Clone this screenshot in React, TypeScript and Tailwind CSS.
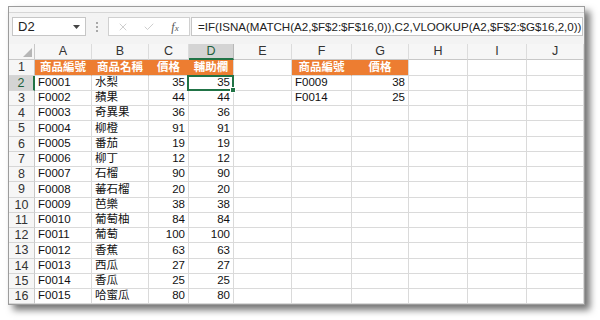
import { X, Check } from 'lucide-react'

type Col = { key: string; w: string; align: 'left' | 'right' | 'center' }

const cols: Col[] = [
  { key: 'A', w: 'w-[57px]', align: 'left' },
  { key: 'B', w: 'w-[57px]', align: 'left' },
  { key: 'C', w: 'w-[40px]', align: 'right' },
  { key: 'D', w: 'w-[45px]', align: 'right' },
  { key: 'E', w: 'w-[58px]', align: 'left' },
  { key: 'F', w: 'w-[60px]', align: 'left' },
  { key: 'G', w: 'w-[57px]', align: 'right' },
  { key: 'H', w: 'w-[59px]', align: 'left' },
  { key: 'I', w: 'w-[59px]', align: 'left' },
  { key: 'J', w: 'w-[57px]', align: 'left' },
]

const rowH = ['h-[16px]', 'h-[15px]', 'h-[15px]', 'h-[15px]']

const fruits = ['水梨', '蘋果', '奇異果', '柳橙', '番茄', '柳丁', '石榴', '蕃石榴', '芭樂', '葡萄柚', '葡萄', '香蕉', '西瓜', '香瓜', '哈蜜瓜']
const prices = [35, 44, 36, 91, 19, 12, 90, 20, 38, 84, 100, 63, 27, 25, 80]

const header: Record<string, string> = { A: '商品編號', B: '商品名稱', C: '價格', D: '輔助欄', F: '商品編號', G: '價格' }
const lookup = [['F0009', '38'], ['F0014', '25']]

const font = "font-['Liberation_Sans','Noto_Sans_CJK_TC',sans-serif]"

function cellValue(col: string, r: number): string {
  if (r === 1) return header[col] ?? ''
  const i = r - 2
  if (col === 'A') return 'F' + String(i + 1).padStart(4, '0')
  if (col === 'B') return fruits[i]
  if (col === 'C' || col === 'D') return String(prices[i])
  if (col === 'F' && lookup[i]) return lookup[i][0]
  if (col === 'G' && lookup[i]) return lookup[i][1]
  return ''
}

export default function App() {
  const rows = Array.from({ length: 16 }, (_, i) => i + 1)

  return (
    <div className={`w-[600px] h-[320px] bg-white pt-[6px] pl-[8px] ${font}`}>
      <div className="w-[577px] border border-[#9c9c9c] bg-white shadow-[5px_5px_7px_rgba(0,0,0,0.55)]">
        {/* ribbon edge */}
        <div className="h-[6px] bg-[#f6f6f6] border-b border-[#d6d6d6]" />

        {/* formula bar */}
        <div className="h-[31px] bg-[#f3f3f3] flex items-start pt-[4px]">
          <div className="ml-[3px] w-[74px] h-[19px] bg-white border border-[#c6c6c6] flex items-center pl-[5px] pr-[5px] justify-between">
            <span className="text-[13px] text-[#222]">D2</span>
            <svg width="7" height="4" viewBox="0 0 7 4"><polygon points="0,0 7,0 3.5,4" fill="#444" /></svg>
          </div>
          <div className="w-[22px] h-[19px] flex flex-col items-center justify-center gap-[2px]">
            <span className="w-[2px] h-[2px] bg-[#a8a8a8]" />
            <span className="w-[2px] h-[2px] bg-[#a8a8a8]" />
            <span className="w-[2px] h-[2px] bg-[#a8a8a8]" />
          </div>
          <div className="w-[82px] h-[19px] bg-white border border-[#d0d0d0] flex items-center">
            <div className="w-[27px] flex justify-center"><X size={12} strokeWidth={1.3} color="#b4b4b4" /></div>
            <div className="w-[26px] flex justify-center"><Check size={12} strokeWidth={1.3} color="#b4b4b4" /></div>
            <div className="w-[26px] flex justify-center">
              <span className="font-['Liberation_Serif',serif] italic text-[12px] text-[#555] leading-none">f<span className="text-[9px]">x</span></span>
            </div>
          </div>
          <div className="ml-[1px] w-[392px] h-[19px] bg-white border border-[#c6c6c6] flex items-center pl-[6px] overflow-hidden whitespace-nowrap">
            <span className="text-[11.6px] text-[#222]">{'=IF(ISNA(MATCH(A2,$F$2:$F$16,0)),C2,VLOOKUP(A2,$F$2:$G$16,2,0))'}</span>
          </div>
        </div>

        {/* column headers */}
        <div className="flex h-[16px] bg-[#f6f6f6]">
          <div className="w-[26px] h-[16px] border-r border-b border-[#c8c8c8] flex items-end justify-end p-[2px]">
            <svg width="9" height="9" viewBox="0 0 9 9"><polygon points="9,0 9,9 0,9" fill="#b6b6b6" /></svg>
          </div>
          {cols.map(c => (
            <div
              key={c.key}
              className={`${c.w} h-[16px] border-r flex items-center justify-center text-[12.5px] ${c.key === 'D' ? 'bg-[#d4d4d4] border-r-[#b8b8b8] border-b-2 border-b-[#217346] text-[#1e5f3b]' : 'border-r-[#dcdcdc] border-b border-b-[#c8c8c8] text-[#333]'}`}
            >
              {c.key}
            </div>
          ))}
        </div>

        {/* rows */}
        {rows.map(r => {
          const h = rowH[(r - 1) % 4]
          return (
            <div key={r} className={`flex ${h}`}>
              <div className={`w-[26px] ${h} border-b border-[#d6d6d6] flex items-center justify-center text-[12.5px] ${r === 2 ? 'bg-[#d4d4d4] border-r-2 border-r-[#217346] text-[#1e5f3b]' : 'bg-[#f6f6f6] border-r border-r-[#c8c8c8] text-[#333]'}`}>
                {r}
              </div>
              {cols.map(c => {
                const v = cellValue(c.key, r)
                const orange = r === 1 && header[c.key] !== undefined
                const selected = r === 2 && c.key === 'D'
                const align = orange ? 'justify-center' : c.align === 'right' ? 'justify-end' : 'justify-start'
                const rightBorder = orange && (c.key === 'A' || c.key === 'B' || c.key === 'C' || c.key === 'F') ? 'border-r-[#ed7d31]' : 'border-r-[#dadada]'
                return (
                  <div
                    key={c.key}
                    className={`${c.w} ${h} relative border-r border-b border-b-[#dadada] ${rightBorder} flex items-center ${align} px-[3px] whitespace-nowrap text-[11.5px] ${orange ? 'bg-[#ed7d31] text-white font-bold' : 'text-[#111]'}`}
                  >
                    {v}
                    {selected && (
                      <div className="absolute -left-[2px] -top-[1px] -right-[1px] -bottom-[1px] border-2 border-[#217346] z-10">
                        <div className="absolute -right-[4px] -bottom-[4px] w-[6px] h-[6px] bg-[#217346] border border-white" />
                      </div>
                    )}
                  </div>
                )
              })}
            </div>
          )
        })}
      </div>
    </div>
  )
}
